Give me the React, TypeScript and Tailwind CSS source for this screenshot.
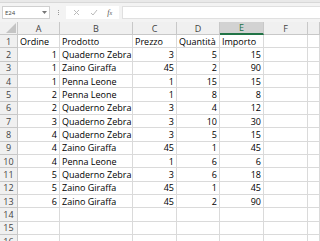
const cols = [
  { key: "A", w: "w-[42px]" },
  { key: "B", w: "w-[73px]" },
  { key: "C", w: "w-[44px]" },
  { key: "D", w: "w-[43px]" },
  { key: "E", w: "w-[44px]" },
  { key: "F", w: "w-[44px]" },
  { key: "G", w: "flex-1" },
];

type Cell = { v: string; right?: boolean };

const header: Cell[] = [
  { v: "Ordine" },
  { v: "Prodotto" },
  { v: "Prezzo" },
  { v: "Quantità" },
  { v: "Importo" },
];

const data: [number, string, number, number, number][] = [
  [1, "Quaderno Zebra", 3, 5, 15],
  [1, "Zaino Giraffa", 45, 2, 90],
  [1, "Penna Leone", 1, 15, 15],
  [2, "Penna Leone", 1, 8, 8],
  [2, "Quaderno Zebra", 3, 4, 12],
  [3, "Quaderno Zebra", 3, 10, 30],
  [4, "Quaderno Zebra", 3, 5, 15],
  [4, "Zaino Giraffa", 45, 1, 45],
  [4, "Penna Leone", 1, 6, 6],
  [5, "Quaderno Zebra", 3, 6, 18],
  [5, "Zaino Giraffa", 45, 1, 45],
  [6, "Zaino Giraffa", 45, 2, 90],
];

const rows: Cell[][] = [
  header,
  ...data.map((r) => [
    { v: String(r[0]), right: true },
    { v: r[1] },
    { v: String(r[2]), right: true },
    { v: String(r[3]), right: true },
    { v: String(r[4]), right: true },
  ]),
  [],
  [],
  [],
];

function Row({ n, cells }: { n: number; cells: Cell[] }) {
  return (
    <div className="flex h-[13.33px] shrink-0">
      <div className="flex w-[18px] shrink-0 items-center justify-center border-b border-r border-[#c8c8c8] bg-[#f0f0f0] text-[9px] leading-none text-[#444]">
        {n}
      </div>
      {cols.map((c, i) => {
        const cell = cells[i];
        return (
          <div
            key={c.key}
            className={`${c.w} flex shrink-0 items-center overflow-visible whitespace-nowrap border-b border-r border-[#dadada] px-[2px] text-[9px] leading-none text-black ${
              cell?.right ? "justify-end" : "justify-start"
            }`}
          >
            {cell?.v}
          </div>
        );
      })}
    </div>
  );
}

export default function App() {
  return (
    <div className="flex h-[241px] w-[320px] flex-col overflow-hidden bg-white font-['Open_Sans',sans-serif]">
      <div className="h-[3px] shrink-0 border-b border-[#d8d8d8] bg-[#e9e9e9]" />
      <div className="flex h-[19px] shrink-0 items-center gap-[2px] bg-[#f3f3f3] pl-[2px]">
        <div className="flex h-[13px] w-[48px] items-center justify-between border border-[#d0d0d0] bg-white px-[2px]">
          <span className="text-[6px] leading-none text-[#444]">E24</span>
          <svg width="5" height="4" viewBox="0 0 5 4">
            <path d="M0 0h5L2.5 3z" fill="#777" />
          </svg>
        </div>
        <div className="flex w-[12px] flex-col items-center gap-[1px]">
          <span className="h-[1px] w-[1px] bg-[#999]" />
          <span className="h-[1px] w-[1px] bg-[#999]" />
          <span className="h-[1px] w-[1px] bg-[#999]" />
        </div>
        <div className="flex h-[13px] w-[53px] items-center justify-around bg-white px-[2px]">
          <svg width="7" height="7" viewBox="0 0 7 7">
            <path d="M1 1l5 5M6 1L1 6" stroke="#bbb" strokeWidth="1" />
          </svg>
          <svg width="8" height="7" viewBox="0 0 8 7">
            <path d="M1 4l2 2 4-5" stroke="#bbb" strokeWidth="1" fill="none" />
          </svg>
          <span className="font-['Liberation_Serif',serif] text-[8px] italic leading-none text-[#555]">
            f<span className="text-[6px]">x</span>
          </span>
        </div>
        <div className="ml-[1px] h-[13px] flex-1 border-y border-l border-[#e0e0e0] bg-white" />
      </div>
      <div className="flex h-[13px] shrink-0 bg-[#f0f0f0]">
        <div className="relative w-[18px] shrink-0 border-b border-r border-[#c8c8c8]">
          <svg className="absolute bottom-[1px] right-[1px]" width="10" height="10" viewBox="0 0 10 10">
            <path d="M10 0v10H0z" fill="#c4c4c4" />
          </svg>
        </div>
        {cols.map((c) => (
          <div
            key={c.key}
            className={`${c.w} flex shrink-0 items-center justify-center border-r text-[9px] leading-none ${
              c.key === "E"
                ? "border-b-2 border-b-[#217346] border-r-[#c8c8c8] bg-[#d2d2d2] text-[#217346]"
                : "border-b border-[#c8c8c8] text-[#444]"
            }`}
          >
            {c.key === "G" ? "" : c.key}
          </div>
        ))}
      </div>
      {rows.map((cells, i) => (
        <Row key={i} n={i + 1} cells={cells} />
      ))}
    </div>
  );
}
